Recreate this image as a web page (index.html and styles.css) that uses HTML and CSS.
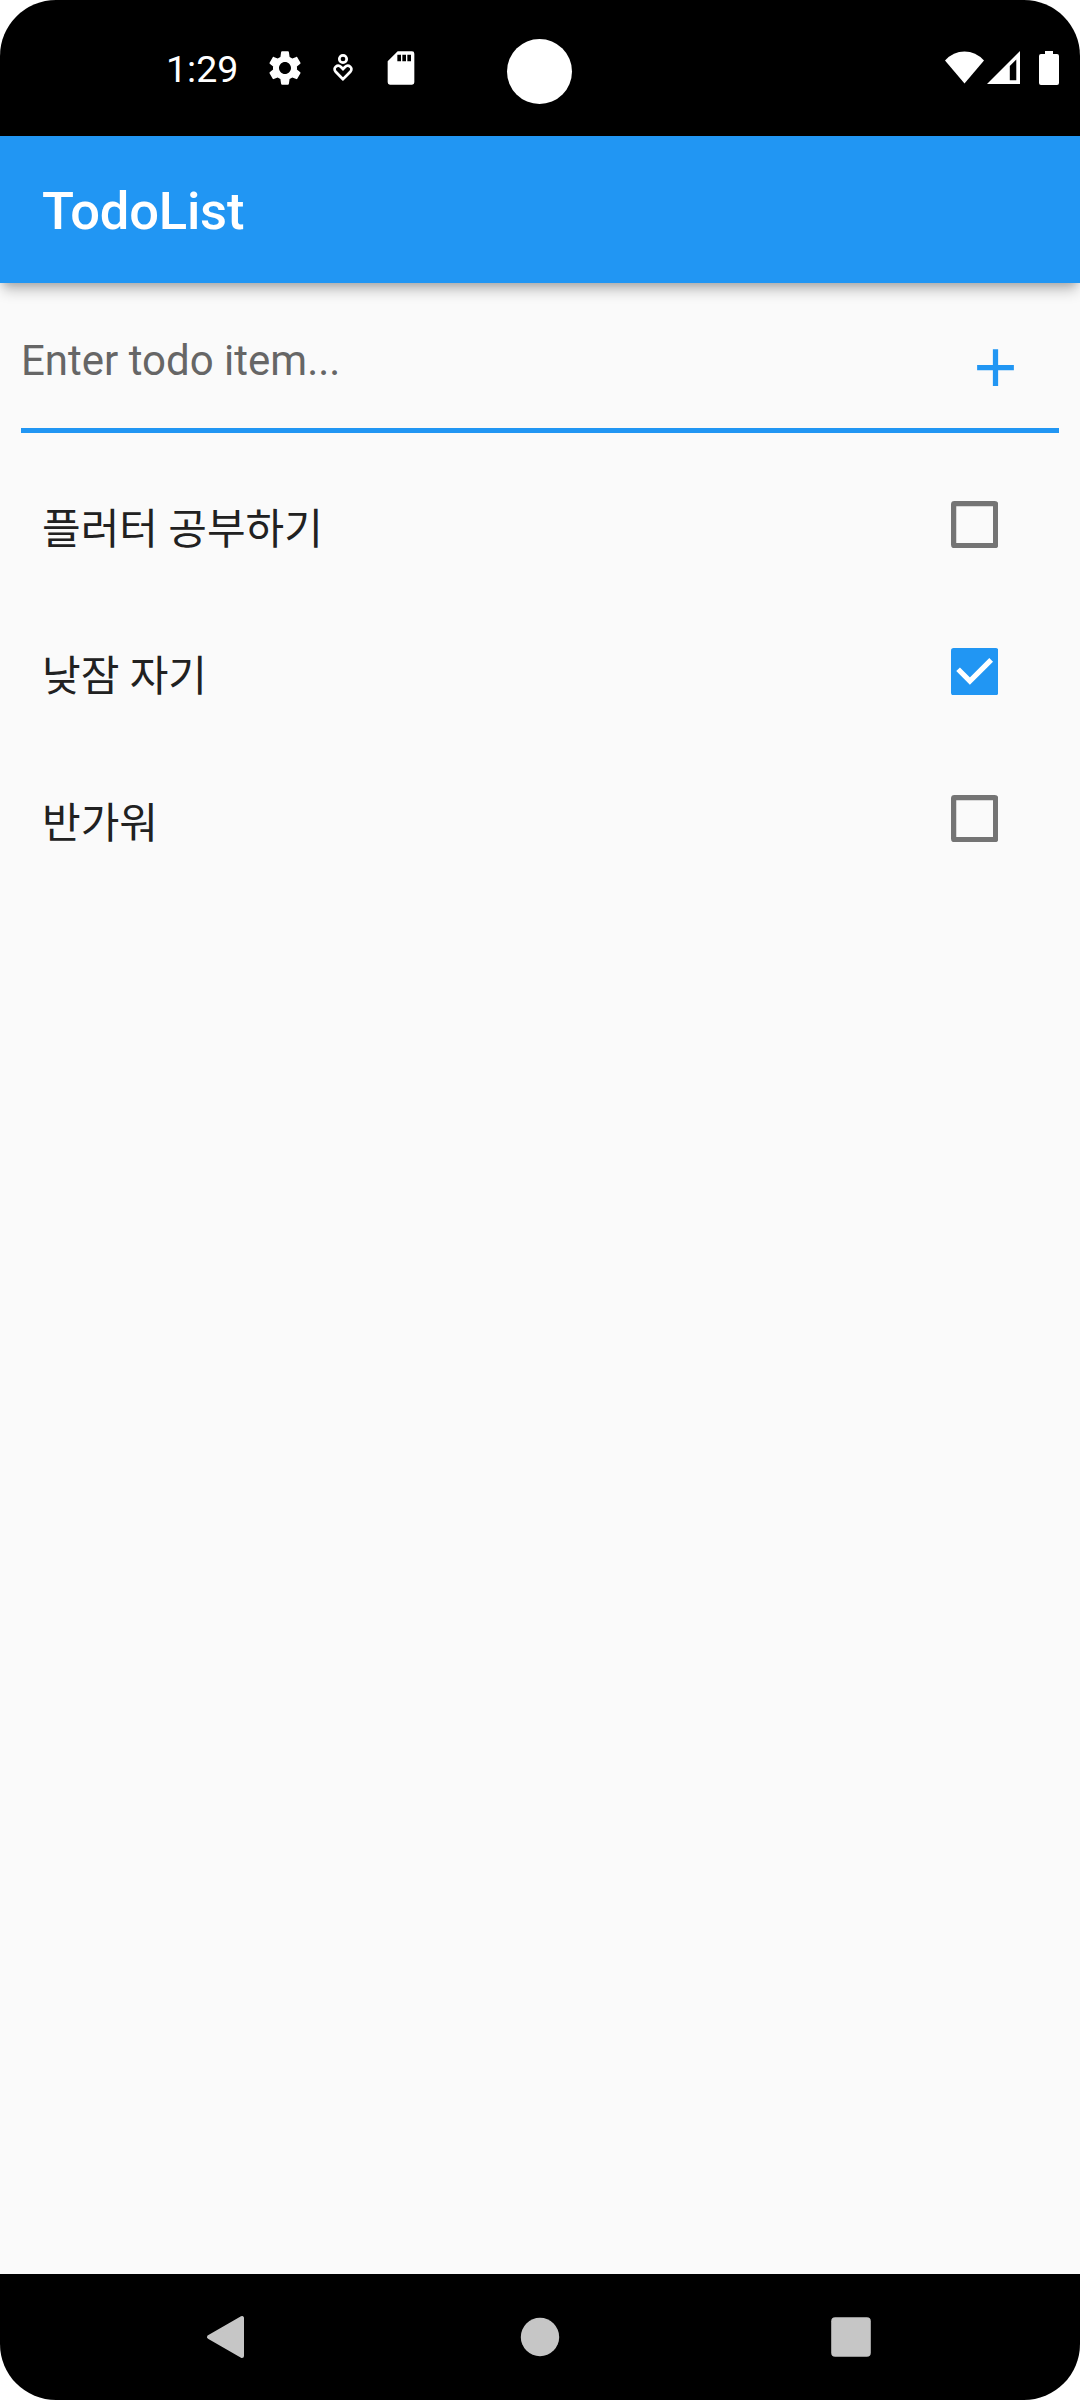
FILE: index.html
```html
<!DOCTYPE html>
<html lang="ko">
<head>
<meta charset="utf-8">
<title>TodoList</title>
<link rel="stylesheet" href="styles.css">
</head>
<body>
<div class="screen">
  <header class="status">
    <div class="status-left">
      <span class="clock">1:29</span>
      <svg class="status-icon" viewBox="0 0 24 24" fill="#fff"><path d="M19.14 12.94c.04-.3.06-.61.06-.94 0-.32-.02-.64-.07-.94l2.03-1.58c.18-.14.23-.41.12-.61l-1.92-3.32c-.12-.22-.37-.29-.59-.22l-2.39.96c-.5-.38-1.03-.7-1.62-.94L14.4 2.81c-.04-.24-.24-.81-.48-.81h-3.84c-.24 0-.43.57-.47.81L9.25 5.35c-.59.24-1.13.57-1.62.94l-2.39-.96c-.22-.08-.47 0-.59.22L2.74 8.87c-.12.21-.08.47.12.61l2.03 1.58c-.05.3-.09.63-.09.94s.02.64.07.94l-2.03 1.58c-.18.14-.23.41-.12.61l1.92 3.32c.12.22.37.29.59.22l2.39-.96c.5.38 1.03.7 1.62.94l.36 2.54c.05.24.24.81.48.81h3.84c.24 0 .44-.57.47-.81l.36-2.54c.59-.24 1.13-.56 1.62-.94l2.39.96c.22.08.47 0 .59-.22l1.92-3.32c.12-.22.07-.47-.12-.61l-2.01-1.58zM12 15.6c-1.98 0-3.6-1.62-3.6-3.6s1.62-3.6 3.6-3.6 3.6 1.62 3.6 3.6-1.62 3.6-3.6 3.6z"/></svg>
      <svg class="status-icon" viewBox="0 0 40 40" fill="none" stroke="#fff" stroke-width="2.7"><circle cx="20" cy="11" r="3.7"/><path d="M20 31.2L12.7 23.8C9.2 20 14.6 15.6 18 19L20 21L22 19C25.4 15.6 30.8 20 27.3 23.8Z"/></svg>
      <svg class="status-icon" viewBox="0 0 24 24" fill="#fff"><path fill-rule="evenodd" d="M10 2H18.6Q20 2 20 3.4V20.6Q20 22 18.6 22H5.4Q4 22 4 20.6V8ZM9.8 4V8H12V4ZM12.8 4V8H15V4ZM15.8 4V8H18V4Z"/></svg>
    </div>
    <div class="camera"></div>
    <div class="status-right">
      <svg class="wifi" viewBox="0 0 40 33" fill="#fff"><path d="M0 9.2Q8.5 0 20 0T40 9.2L20 33Z"/></svg>
      <svg class="signal" viewBox="0 0 33 33" fill="#fff"><path fill-rule="evenodd" d="M33 0V33H0ZM29.3 8.5L22.8 15V29.3H29.3Z"/></svg>
      <svg class="battery" viewBox="0 0 20 34" fill="#fff"><path d="M6 0H14V3H18Q20 3 20 5V32Q20 34 18 34H2Q0 34 0 32V5Q0 3 2 3H6Z"/></svg>
    </div>
  </header>
  <div class="appbar"><h1 class="title">TodoList</h1></div>
  <main class="content">
    <div class="field">
      <span class="hint">Enter todo item...</span>
      <svg class="add" viewBox="0 0 24 24" fill="#2196f3"><path d="M19 13h-6v6h-2v-6H5v-2h6V5h2v6h6v2z"/></svg>
    </div>
    <ul class="list">
      <li class="item"><span class="label">플러터 공부하기</span><svg class="check" viewBox="0 0 18 18"><rect x="1" y="1" width="16" height="16" rx=".3" fill="none" stroke="#747474" stroke-width="2" stroke-linejoin="round"/></svg></li>
      <li class="item"><span class="label">낮잠 자기</span><svg class="check" viewBox="0 0 18 18"><rect width="18" height="18" rx="1" fill="#2196f3"/><path d="M2.7 8.1L7.2 12.6L15.3 4.5" fill="none" stroke="#fff" stroke-width="2"/></svg></li>
      <li class="item"><span class="label">반가워</span><svg class="check" viewBox="0 0 18 18"><rect x="1" y="1" width="16" height="16" rx=".3" fill="none" stroke="#747474" stroke-width="2" stroke-linejoin="round"/></svg></li>
    </ul>
  </main>
  <nav class="nav">
    <svg class="nav-icon" viewBox="0 0 44 44"><path d="M5 22L38 3V41Z" fill="#c6c6c6" stroke="#c6c6c6" stroke-width="4" stroke-linejoin="round"/></svg>
    <svg class="nav-icon home" viewBox="0 0 44 44"><circle cx="22" cy="22" r="19.2" fill="#c6c6c6"/></svg>
    <svg class="nav-icon" viewBox="0 0 44 44"><rect x="2.2" y="2.2" width="39.6" height="39.6" rx="4" fill="#c6c6c6"/></svg>
  </nav>
</div>
</body>
</html>
```
FILE: styles.css
```css
* { box-sizing: border-box; }
body { margin: 0; background: #fff; font-family: Roboto, "Noto Sans CJK KR", sans-serif; }
svg { display: block; flex: none; }
.screen { width: 1080px; height: 2400px; display: flex; flex-direction: column; background: #fafafa; border-radius: 56px; overflow: hidden; }
.status { position: relative; flex: none; height: 136px; display: flex; justify-content: space-between; background: #000; color: #fff; padding: 0 21px 0 166px; }
.status-left { display: flex; align-items: center; height: 136px; }
.clock { width: 99px; padding-top: 2px; font-size: 37.5px; line-height: 44px; }
.status-icon { width: 40px; height: 40px; margin-right: 18px; }
.camera { position: absolute; left: 507px; top: 39px; width: 65px; height: 65px; border-radius: 50%; background: #fff; }
.status-right { display: flex; align-items: flex-start; padding-top: 51px; }
.wifi { width: 39px; height: 33px; margin-right: 3px; }
.signal { width: 33px; height: 33px; margin-right: 19px; }
.battery { width: 20px; height: 34px; }
.appbar { position: relative; flex: none; height: 147px; display: flex; align-items: center; padding: 2px 0 0 42px; background: #2196f3; box-shadow: 0 10px 13px -3px rgba(0,0,0,.24), 0 4px 8px -3px rgba(0,0,0,.17); }
.title { margin: 0; font-size: 52.5px; line-height: 62px; font-weight: 500; letter-spacing: -.2px; color: #fff; }
.content { flex: 1; padding: 21px 21px 0; }
.field { display: flex; justify-content: space-between; height: 128.6px; border-bottom: 5.25px solid #2196f3; padding-right: 31.8px; }
.hint { padding-top: 32px; font-size: 42px; line-height: 50px; color: #666; }
.add { width: 63px; height: 63px; margin-top: 32px; }
.list { list-style: none; margin: 18.6px 0 0; padding: 0; }
.item { display: flex; align-items: center; justify-content: space-between; height: 147px; padding: 0 60.6px 0 21px; }
.label { padding-top: 10px; font-size: 42px; line-height: 50px; color: #212121; }
.check { width: 47.25px; height: 47.25px; }
.nav { flex: none; height: 126px; display: flex; align-items: center; justify-content: space-between; padding: 0 207px 0 204px; background: #000; }
.nav-icon { width: 44px; height: 44px; }
.home { margin-left: 3px; }
```
